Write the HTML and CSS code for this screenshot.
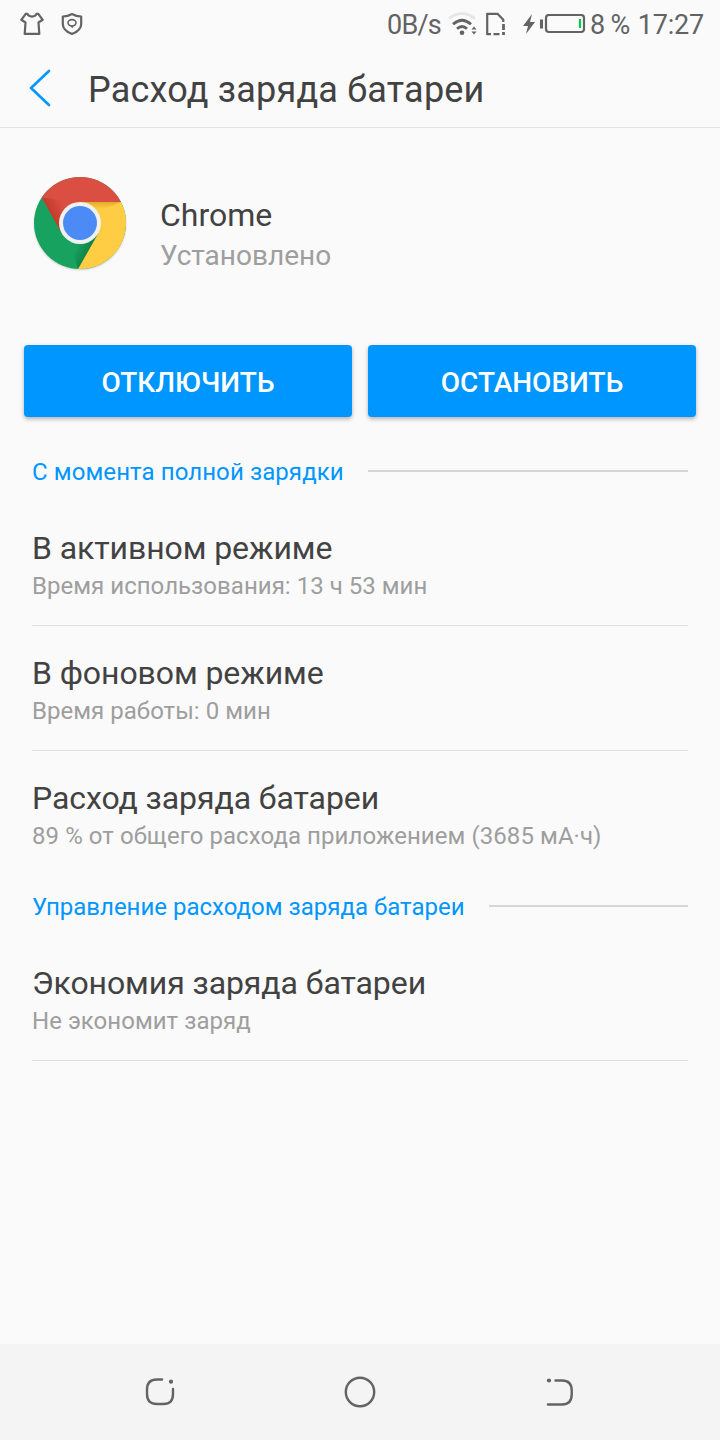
FILE: index.html
```html
<!DOCTYPE html>
<html lang="ru">
<head>
<meta charset="UTF-8">
<meta name="viewport" content="width=device-width, initial-scale=1.0">
<title>Расход заряда батареи</title>
<link rel="stylesheet" href="styles.css">
</head>
<body>

<div class="status-bar">
    <svg class="icon-shirt" width="24" height="24" viewBox="0 0 24 24">
        <path d="M7.500 1.900C9 5.400 15 5.400 16.500 1.900H18.300L22.700 7.800L18.500 10.500L19.300 21.900H4.700L5.500 10.500L1.300 7.800L5.700 1.900Z"/>
    </svg>
    <svg class="icon-shield" width="22" height="24" viewBox="0 0 22 24">
        <path d="M11 2C8 3.700 5 4.400 1.800 4.500V12C1.800 17 6.500 20.300 11 22C15.500 20.300 20.200 17 20.200 12V4.500C17 4.400 14 3.700 11 2Z"/>
        <ellipse class="thin" cx="11" cy="10.800" rx="4" ry="3.200"/>
        <path class="fill" d="M9.500 13.500H12.800L11.200 16.500Z"/>
    </svg>
    <div class="status-right">
        <span class="speed">0B/s</span>
        <svg class="icon-wifi" width="30" height="24" viewBox="0 0 30 24">
            <path class="faint" d="M1 6.800C9 0 19 0 27 6.800"/>
            <path d="M5 12.300C11 6.800 17 6.800 23 12.300"/>
            <path d="M9 16.700C12.300 13.800 15.700 13.800 19 16.700"/>
            <circle class="fill" cx="14" cy="20.800" r="2.300"/>
            <path class="fill" d="M26 14.500L28.500 17.500H23.500ZM26 22.500L28.500 19.500H23.500Z"/>
        </svg>
        <svg class="icon-sim" width="20" height="24" viewBox="0 0 20 24">
            <path d="M5 22.200H1.200V1.800H11.500L17.300 7.800V10M7.500 22.200H13.500"/>
            <path class="mark" d="M17.500 12V18M17.500 20V23"/>
        </svg>
        <svg class="icon-bolt" width="12" height="20" viewBox="0 0 12 20">
            <path class="fill" d="M9 0L0 12H5L3 20L12 8H7Z"/>
        </svg>
        <svg class="icon-battery" width="46" height="20" viewBox="0 0 46 20">
            <path class="fill" d="M0 5.500H3V14.500H0Z"/>
            <rect x="6" y="1" width="38" height="17" rx="3"/>
            <path class="level" d="M40 5V14"/>
        </svg>
        <span class="percent">8 %</span>
        <span class="clock">17:27</span>
    </div>
</div>

<div class="header">
    <svg class="back" width="22" height="38" viewBox="0 0 22 38">
        <path d="M20 2L2 19L20 36"/>
    </svg>
    <h1>Расход заряда батареи</h1>
</div>

<div class="content">
    <div class="app">
        <svg class="app-icon" width="96" height="98" viewBox="0 0 96 98">
            <defs>
                <linearGradient id="redShade" gradientUnits="userSpaceOnUse" x1="19" y1="40" x2="33" y2="32">
                    <stop offset="0" stop-color="#a52714" stop-opacity=".5"/>
                    <stop offset="1" stop-color="#a52714" stop-opacity="0"/>
                </linearGradient>
                <linearGradient id="yellowShade" gradientUnits="userSpaceOnUse" x1="64" y1="27" x2="64" y2="34">
                    <stop offset="0" stop-color="#b87c00" stop-opacity=".4"/>
                    <stop offset="1" stop-color="#b87c00" stop-opacity="0"/>
                </linearGradient>
                <linearGradient id="greenShade" gradientUnits="userSpaceOnUse" x1="58" y1="73" x2="47" y2="67">
                    <stop offset="0" stop-color="#055524" stop-opacity=".4"/>
                    <stop offset="1" stop-color="#055524" stop-opacity="0"/>
                </linearGradient>
            </defs>
            <circle class="app-shadow" cx="48" cy="49" r="45.500"/>
            <circle cx="48" cy="48" r="46" fill="#18a25f"/>
            <path d="M48 48L66.200 58.500L46 94A46 46 0 0 0 89 27H48Z" fill="#ffcd43"/>
            <path d="M48 27H89A46 46 0 0 0 9.800 22.500L29 57L48 48Z" fill="#db4f42"/>
            <path d="M9.800 22.500L29 57L48 48V27Z" fill="url(#redShade)"/>
            <path d="M48 27H89L67 36Z" fill="url(#yellowShade)"/>
            <path d="M66.200 58.500L46 94L36 60Z" fill="url(#greenShade)"/>
            <circle cx="48" cy="48" r="21" fill="#f1f1f1"/>
            <circle cx="48" cy="48" r="17" fill="#4c8bf5"/>
        </svg>
        <div class="app-info">
            <div class="app-name">Chrome</div>
            <div class="app-state">Установлено</div>
        </div>
    </div>

    <div class="buttons">
        <button>ОТКЛЮЧИТЬ</button>
        <button>ОСТАНОВИТЬ</button>
    </div>

    <div class="section since-charge"><span>С момента полной зарядки</span></div>
    <div class="row">
        <div class="row-title">В активном режиме</div>
        <div class="row-text">Время использования: 13 ч 53 мин</div>
    </div>
    <div class="row">
        <div class="row-title">В фоновом режиме</div>
        <div class="row-text">Время работы: 0 мин</div>
    </div>
    <div class="row last">
        <div class="row-title">Расход заряда батареи</div>
        <div class="row-text usage">89 % от общего расхода приложением (3685 мА·ч)</div>
    </div>

    <div class="section"><span>Управление расходом заряда батареи</span></div>
    <div class="row">
        <div class="row-title">Экономия заряда батареи</div>
        <div class="row-text">Не экономит заряд</div>
    </div>
</div>

<div class="nav-bar">
    <svg width="32" height="32" viewBox="0 0 32 32">
        <path d="M18 3.500H13Q3 3.500 3 13.500V18Q3 28 13 28H19.500Q29 28 29 18V13"/>
        <circle class="fill" cx="27" cy="5.700" r="2.100"/>
    </svg>
    <svg width="32" height="32" viewBox="0 0 32 32">
        <circle cx="16" cy="16" r="14.200"/>
    </svg>
    <svg width="32" height="32" viewBox="0 0 32 32">
        <path d="M11.500 4.500H18Q27.700 4.500 27.700 14.500V18.500Q27.700 28.500 18 28.500H4"/>
        <circle class="fill" cx="5" cy="4.500" r="2.100"/>
    </svg>
</div>

</body>
</html>
```
FILE: styles.css
```css
* {
    box-sizing: border-box;
}
body {
    margin: 0;
    height: 1440px;
    display: flex;
    flex-direction: column;
    font-family: Roboto, "Noto Sans", sans-serif;
    background-color: #fafafa;
    color: #424242;
}
svg {
    flex: none;
    fill: none;
}

/* Status bar */
.status-bar {
    height: 48px;
    padding: 0 16px 0 20px;
    display: flex;
    align-items: center;
    font-size: 27px;
    line-height: 48px;
    color: #636363;
}
.status-bar svg {
    stroke: #636363;
    stroke-width: 2.2;
    stroke-linejoin: round;
}
.status-bar .fill, .nav-bar .fill {
    fill: #636363;
    stroke: none;
}
.icon-shield {
    margin-left: 17px;
}
.icon-shield .thin {
    stroke-width: 1.6;
}
.status-right {
    margin-left: auto;
    display: flex;
    align-items: center;
}
.status-right span {
    padding-top: 2px;
}
.speed {
    letter-spacing: -0.8px;
}
.icon-wifi {
    margin-left: 7px;
}
.status-bar .icon-wifi {
    stroke-width: 2.8;
}
.icon-wifi .faint {
    stroke: #e6e6e6;
}
.icon-sim {
    margin-left: 8px;
}
.icon-sim .mark {
    stroke-width: 2.8;
}
.icon-bolt {
    margin-left: 17px;
}
.icon-battery {
    margin: 0 4px 0 5px;
}
.icon-battery .level {
    stroke: #00c853;
}
.percent {
    letter-spacing: -0.6px;
}
.clock {
    margin-left: 8px;
    letter-spacing: -0.2px;
}

/* Header */
.header {
    height: 80px;
    padding-left: 29px;
    display: flex;
    align-items: center;
    border-bottom: 1px solid #e2e2e2;
}
.back {
    stroke: #0096ff;
    stroke-width: 2.6;
    stroke-linecap: round;
    stroke-linejoin: round;
}
h1 {
    margin: 4px 0 0 37px;
    font-size: 36px;
    font-weight: 400;
    line-height: 42px;
    letter-spacing: 0.2px;
}

/* App info */
.content {
    flex: 1;
}
.app {
    height: 217px;
    padding: 47px 32px 0;
    display: flex;
}
.app-shadow {
    fill: #b5b5b5;
    filter: blur(1px);
}
.app-info {
    margin: 19px 0 0 32px;
}
.app-name {
    font-size: 32px;
    line-height: 42px;
}
.app-state {
    font-size: 28px;
    line-height: 40px;
    color: #9e9e9e;
}
.buttons {
    display: grid;
    grid-template-columns: 1fr 1fr;
    gap: 16px;
    padding: 0 24px;
    margin-bottom: 24px;
}
button {
    height: 72px;
    padding: 2px 0 0;
    border: none;
    border-radius: 4px;
    background-color: #0096ff;
    color: #fff;
    font-family: inherit;
    font-size: 28px;
    font-weight: 500;
    box-shadow: 0 2px 4px rgba(0,0,0,0.3);
}

/* Battery usage list */
.section {
    height: 60px;
    padding: 0 32px;
    display: flex;
    align-items: center;
    gap: 24px;
    font-size: 24px;
    line-height: 58px;
    color: #0096ff;
}
.section span {
    padding-top: 2px;
}
.since-charge {
    letter-spacing: 0.09px;
}
.section::after {
    content: "";
    flex: 1;
    height: 2px;
    background-color: #d6d6d6;
}
.row {
    height: 125px;
    margin: 0 32px;
    padding-top: 27px;
    border-bottom: 1px solid #dedede;
}
.row.last {
    border-bottom: none;
}
.row-title {
    font-size: 32px;
    line-height: 40px;
    letter-spacing: -0.08px;
}
.row-text {
    font-size: 24px;
    line-height: 36px;
    letter-spacing: 0.03px;
    color: #9e9e9e;
}
.row-text.usage {
    letter-spacing: 0.07px;
}

/* Navigation bar */
.nav-bar {
    height: 96px;
    display: flex;
    justify-content: center;
    align-items: center;
    gap: 168px;
    background-color: #f4f4f4;
}
.nav-bar svg {
    stroke: #636363;
    stroke-width: 2.4;
    stroke-linecap: round;
}
```
